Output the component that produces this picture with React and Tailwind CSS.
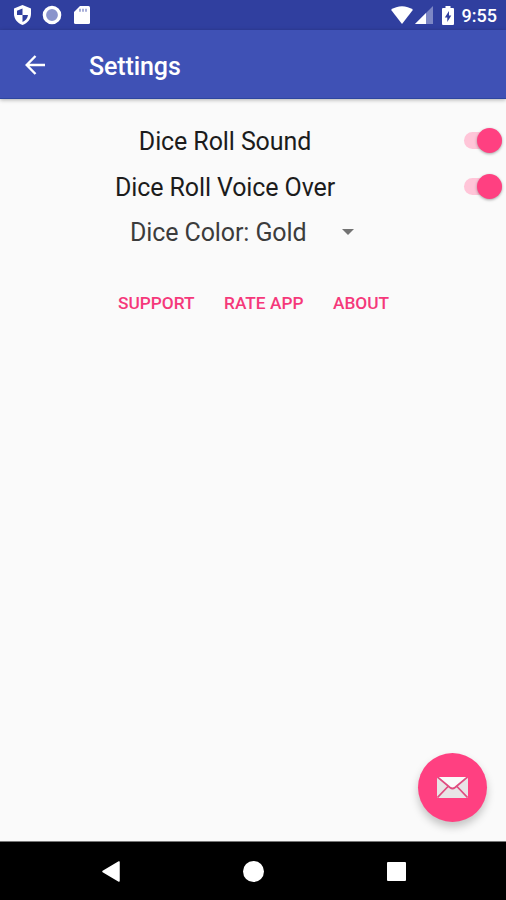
import React from 'react';

const StatusBar = () => (
  <div className="flex h-[30px] items-center justify-between bg-[#303f9f] text-white">
    <div className="flex items-center pl-[13px]">
      <svg className="h-[22px] w-[19px]" viewBox="0 0 19 22" fill="none">
        <path d="M9.500 1 18 4.500v5.500c0 5-3.500 9.300-8.500 11C4.500 19.300 1 15 1 10V4.500z" fill="#fff" />
        <path d="M9.500 4.500V11H4V6.800zM9.500 11H15c-.4 3.200-2.400 5.700-5.500 7z" fill="#303f9f" />
      </svg>
      <svg className="ml-[10px] h-5 w-5" viewBox="0 0 20 20" fill="none">
        <circle cx="10" cy="10" r="7.600" fill="#8a94cc" stroke="#fff" strokeWidth="3.400" />
      </svg>
      <svg className="ml-[12px] h-5 w-4" viewBox="0 0 16 20" fill="none">
        <path d="M6 1h8.500a1.500 1.500 0 0 1 1.500 1.500v15a1.500 1.500 0 0 1-1.500 1.500h-13A1.500 1.500 0 0 1 0 17.500V7z" fill="#fff" />
        <path d="M6 3.800v3M9 3.800v3M12 3.800v3" stroke="#8a94cc" strokeWidth="1.500" />
      </svg>
    </div>
    <div className="flex items-center pr-[9px]">
      <svg className="h-[18px] w-[22px]" viewBox="0 0 22 18">
        <path d="M0 3.800C6.500-.9 15.500-.9 22 3.800L11 18z" fill="#fff" />
      </svg>
      <svg className="ml-[2px] h-[18px] w-[18px]" viewBox="0 0 18 18">
        <path d="M18 0v18H0z" fill="#7d87c5" />
        <path d="M11 7v11H0z" fill="#fff" />
      </svg>
      <svg className="ml-[9px] h-[19px] w-3" viewBox="0 0 12 19">
        <path d="M3.500 0h5v2H11a1 1 0 0 1 1 1v15a1 1 0 0 1-1 1H1a1 1 0 0 1-1-1V3a1 1 0 0 1 1-1h2.500z" fill="#fff" />
        <path d="M7 5 2.800 11.500h2.500V16l4-6.500H7z" fill="#303f9f" />
      </svg>
      <span className="ml-2 pt-px text-[18px] leading-[29px] font-medium">9:55</span>
    </div>
  </div>
);

const Toggle = () => (
  <div className="flex h-[17px] w-[38px] items-center justify-end rounded-full bg-[#ffc5d8]">
    <span className="h-[25px] w-[25px] shrink-0 rounded-full bg-[#ff4081] shadow-[0_1px_3px_rgba(0,0,0,0.35)]" />
  </div>
);

const SettingRow = ({ label }) => (
  <div className="flex h-[45.500px] items-center pr-1">
    <span className="flex-1 pt-[2px] pr-[14px] text-center text-[25px] tracking-[-0.1px] text-[#1c1c1c]">{label}</span>
    <Toggle />
  </div>
);

const App = () => {
  return (
    <div className="flex h-[900px] w-full flex-col bg-[#fafafa] font-['Roboto',sans-serif]">
      <StatusBar />

      <header className="z-10 flex h-[69px] items-center border-b border-[#2d469f] bg-[#3f51b5] pl-[25px] text-white shadow-[0_1px_4px_rgba(0,0,0,0.3)]">
        <svg className="mt-px h-5 w-5" viewBox="0 0 20 20" fill="none" stroke="#fff" strokeWidth="2.400">
          <path d="M20 10H2M10.500 1 1.700 10l8.800 9" />
        </svg>
        <h1 className="ml-11 pt-[6px] text-[25px] tracking-[-0.1px] font-medium">Settings</h1>
      </header>

      <main className="flex flex-1 flex-col pt-[19px]">
        <SettingRow label="Dice Roll Sound" />
        <SettingRow label="Dice Roll Voice Over" />

        <div className="flex h-[45px] items-center pl-[130px]">
          <span className="pt-[2px] text-[25px] tracking-[-0.1px] text-[#3c3c3c]">Dice Color: Gold</span>
          <svg className="ml-[35px] h-[6px] w-3" viewBox="0 0 12 6">
            <path d="M0 0h12L6 6z" fill="#737373" />
          </svg>
        </div>

        <div className="mt-[37px] flex gap-[29.500px] pl-[118px] text-[17.300px] font-medium text-[#f5387a]">
          <button>SUPPORT</button>
          <button>RATE APP</button>
          <button>ABOUT</button>
        </div>

        <button className="mt-auto mr-[19px] mb-[19px] flex h-[69px] w-[69px] items-center justify-center self-end rounded-full bg-[#ff4081] shadow-[0_5px_8px_rgba(0,0,0,0.22)]">
          <svg className="h-[21px] w-[31px]" viewBox="0 0 31 21" fill="none">
            <rect width="31" height="21" rx="1.500" fill="#e8e4e6" />
            <path d="M1 0h29L15.500 12z" fill="#fafafa" />
            <path d="M.5 0 13 10.500q2.500 2 5 0L30.500 0M.5 20.500l10.500-11M30.500 20.500 20 9.500" stroke="#e04c80" strokeWidth="1.700" />
          </svg>
        </button>
      </main>

      <nav className="flex h-[59px] items-center border-t border-[#777] bg-black pl-[102px]">
        <svg className="h-[21px] w-[18px]" viewBox="0 0 18 21">
          <path d="M17 1v19L1 10.500z" fill="#fff" stroke="#fff" strokeWidth="1.500" strokeLinejoin="round" />
        </svg>
        <span className="ml-[123px] h-[21px] w-[21px] rounded-full bg-white" />
        <span className="ml-[123px] h-[19px] w-[19px] rounded-[1px] bg-white" />
      </nav>
    </div>
  );
};

export default App;
